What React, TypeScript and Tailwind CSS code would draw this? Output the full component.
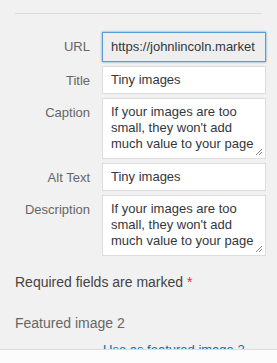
const Field = ({ label, value, area, active }: { label: string; value: string; area?: boolean; active?: boolean }) => {
  return (
    <div className="flex items-start">
      <label className="w-[91px] shrink-0 pr-[1px] pt-[7px] text-right text-[13px] leading-[16px] text-[#666]">{label}</label>
      <div className="ml-[11px] w-[164px]">
        {area ? (
          <div className="relative h-[61px] border border-[#ddd] bg-white px-[8px] pt-[5px] text-[13px] leading-[16px] text-[#32373c]">
            {value}
            <svg className="absolute bottom-[2px] right-[2px]" width="8" height="8" viewBox="0 0 8 8">
              <path d="M7 1 L1 7 M7 4 L4 7" stroke="#888" strokeWidth="1" />
            </svg>
          </div>
        ) : (
          <div
            className={
              active
                ? "h-[30px] border border-[#5b9dd9] bg-[#eee] px-[8px] pt-[6px] text-[13px] leading-[16px] text-[#32373c] whitespace-nowrap overflow-hidden shadow-[0_0_2px_rgba(30,140,190,0.8)]"
                : "h-[28px] border border-[#ddd] bg-white px-[8px] pt-[5px] text-[13px] leading-[16px] text-[#32373c] whitespace-nowrap overflow-hidden"
            }
          >
            {value}
          </div>
        )}
      </div>
    </div>
  );
};

const App = () => {
  const text = "If your images are too small, they won't add much value to your page";
  return (
    <div className="flex h-[363px] w-[277px] flex-col overflow-hidden bg-[#f1f1f1] font-['Liberation_Sans',Arial,sans-serif]">
      <div className="mx-[15px] mt-[13px] h-[1px] bg-[#dcdcdc]"></div>
      <div className="mt-[18px] flex flex-col gap-[4px]">
        <Field label="URL" value="https://johnlincoln.market" active />
        <Field label="Title" value="Tiny images" />
        <Field label="Caption" value={text} area />
        <Field label="Alt Text" value="Tiny images" />
        <Field label="Description" value={text} area />
      </div>
      <p className="ml-[15px] mt-[17px] text-[14px] leading-[18px] text-[#444]">
        Required fields are marked <span className="text-[#dc3232]">*</span>
      </p>
      <p className="ml-[15px] mt-[23px] text-[14px] leading-[18px] text-[#666]">Featured image 2</p>
      <div className="ml-[103px] mt-[5px] h-[8px] overflow-visible">
        <a className="text-[13px] leading-[16px] text-[#0073aa] underline">Use as featured image 2</a>
      </div>
      <div className="mt-auto h-[14px] border-t border-[#ddd] bg-[#fcfcfc] relative z-10"></div>
    </div>
  );
};

export default App;
